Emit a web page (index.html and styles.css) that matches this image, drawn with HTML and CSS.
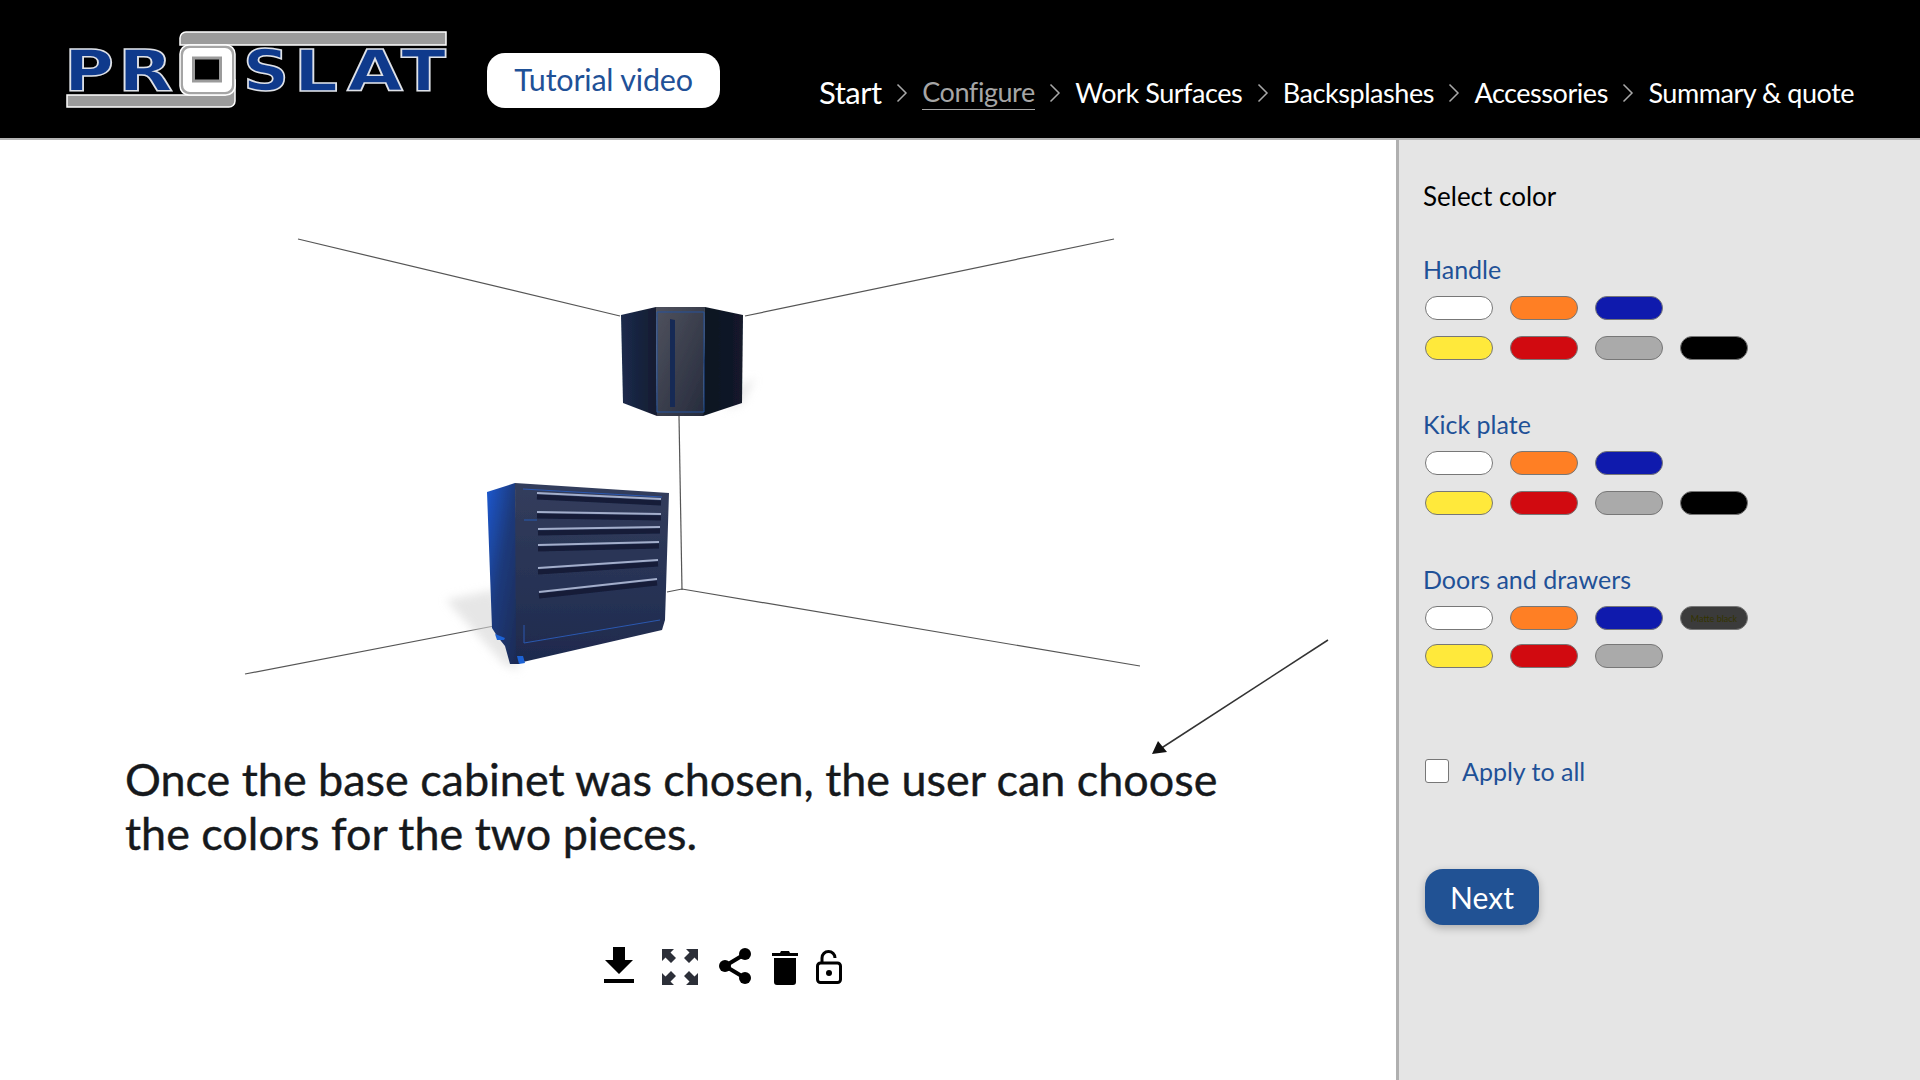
FILE: index.html
```html
<!DOCTYPE html>
<html lang="en">
<head>
<meta charset="utf-8">
<title>ProSlat configurator</title>
<link rel="stylesheet" href="styles.css">
</head>
<body>
<header class="topbar">
  <svg class="logo" viewBox="60 31 387 78" width="387" height="78" aria-label="ProSlat">
    <path class="logo-bar" d="M446 32H186a6 6 0 0 0-6 6V45H446Z"/>
    <path class="logo-bar" d="M67 95V107H229a6 6 0 0 0 6-6V80H225V95Z"/>
    <g class="logo-letters">
      <text x="64" y="91" textLength="50" lengthAdjust="spacingAndGlyphs">P</text>
      <text x="118" y="91" textLength="55" lengthAdjust="spacingAndGlyphs">R</text>
      <text x="243" y="91" textLength="46" lengthAdjust="spacingAndGlyphs">S</text>
      <text x="294" y="91" textLength="44" lengthAdjust="spacingAndGlyphs">L</text>
      <text x="347" y="91" textLength="56" lengthAdjust="spacingAndGlyphs">A</text>
      <text x="401" y="91" textLength="45" lengthAdjust="spacingAndGlyphs">T</text>
    </g>
    <rect class="logo-o-edge" x="180" y="45" width="55" height="50" rx="9"/>
    <rect class="logo-o" x="183" y="48" width="49" height="44" rx="7"/>
    <rect class="logo-o-in" x="193.500" y="58" width="27" height="23"/>
  </svg>
  <a class="tutorial">Tutorial video</a>
  <nav class="steps">
    <span class="step step-first">Start</span><span class="sep"><svg viewBox="0 0 12 20" width="12" height="20"><path d="M1.500 1.500 10 10 1.500 18.500"/></svg></span>
    <span class="step step-current">Configure</span><span class="sep"><svg viewBox="0 0 12 20" width="12" height="20"><path d="M1.500 1.500 10 10 1.500 18.500"/></svg></span>
    <span class="step">Work Surfaces</span><span class="sep"><svg viewBox="0 0 12 20" width="12" height="20"><path d="M1.500 1.500 10 10 1.500 18.500"/></svg></span>
    <span class="step">Backsplashes</span><span class="sep"><svg viewBox="0 0 12 20" width="12" height="20"><path d="M1.500 1.500 10 10 1.500 18.500"/></svg></span>
    <span class="step">Accessories</span><span class="sep"><svg viewBox="0 0 12 20" width="12" height="20"><path d="M1.500 1.500 10 10 1.500 18.500"/></svg></span>
    <span class="step">Summary &amp; quote</span>
  </nav>
</header>
<div class="body-row">
  <main class="stage">
    <svg class="scene" viewBox="0 140 1394 612" width="1394" height="612">
      <defs>
        <linearGradient id="uFront" x1="0" y1="0" x2="1" y2="1"><stop offset="0" stop-color="#4f525e"/><stop offset="1" stop-color="#262b3c"/></linearGradient>
        <linearGradient id="uLeft" x1="0" y1="0" x2="1" y2="0"><stop offset="0" stop-color="#1b2a4c"/><stop offset="1" stop-color="#151c30"/></linearGradient>
        <linearGradient id="uRight" x1="0" y1="0" x2="1" y2="0"><stop offset="0" stop-color="#0c1320"/><stop offset="1" stop-color="#131a2b"/></linearGradient>
        <linearGradient id="lSide" x1="0" y1="0" x2="1" y2="1"><stop offset="0" stop-color="#1a58d0"/><stop offset=".45" stop-color="#1c3a7c"/><stop offset="1" stop-color="#1c2950"/></linearGradient>
        <linearGradient id="lFront" x1="0" y1="0" x2="0" y2="1"><stop offset="0" stop-color="#333d5c"/><stop offset="1" stop-color="#1e2a4e"/></linearGradient>
        <filter id="soft" x="-5%" y="-5%" width="110%" height="110%"><feGaussianBlur stdDeviation=".7"/></filter>
        <filter id="shadow" x="-30%" y="-30%" width="160%" height="160%"><feGaussianBlur stdDeviation="5"/></filter>
      </defs>
      <g class="wire">
        <path d="M298 239 620 316"/>
        <path d="M745 316 1114 239"/>
        <path d="M679 416 682 590"/>
        <path d="M667 592 682 589 1140 666"/>
        <path d="M245 674 494 626"/>
      </g>
      <path class="shadow" d="M446 600 494 590 520 670 505 665Z" filter="url(#shadow)"/>
      <path class="shadow" d="M742 385 755 378 742 403 725 410Z" filter="url(#shadow)"/>
      <g filter="url(#soft)">
        <path d="M621 315 656 307 657 416 623 403Z" fill="url(#uLeft)"/>
        <path d="M656 307H705L703 416H657Z" fill="url(#uFront)"/>
        <path d="M705 307 743 315 742 403 703 416Z" fill="url(#uRight)"/>
        <path d="M657 312H704V412H657Z" fill="none" stroke="#24529c" stroke-width="1"/>
        <path d="M670 319 675 320V407H670Z" fill="#182a55"/>
        <path d="M487 492 515 483 520 664 510 664 505 646 497 636 492 628Z" fill="url(#lSide)"/>
        <path d="M515 483 669 493 665 620 662 630 523 662 516 660Z" fill="url(#lFront)"/>
        <path d="M495 634 505 638 504 640 497 640Z" fill="#1f62d4"/>
        <path d="M517 656 523 656 525 663 519 664Z" fill="#1f62d4"/>
        <g class="frontline"><path d="M523 489 662 497"/><path d="M524 643 660 620"/><path d="M524 520 537 520"/><path d="M524 625V643"/></g>
        <g class="handle-shadow"><path d="M537 497 661 503"/><path d="M537 516 661 518"/><path d="M538 533 660 531"/><path d="M538 549 659 546"/><path d="M538 572 658 564"/><path d="M539 596 657 583"/></g>
        <g class="handle"><path d="M537 493 661 499"/><path d="M537 512 661 514"/><path d="M538 529 660 527"/><path d="M538 545 659 542"/><path d="M538 568 658 560"/><path d="M539 592 657 579"/></g>
      </g>
      <g class="arrow">
        <path d="M1328 640 1160 749"/>
        <path class="arrow-head" d="M1152 754 1158 741 1167 752Z"/>
      </g>
    </svg>
    <p class="caption">Once the base cabinet was chosen, the user can choose<br>the colors for the two pieces.</p>
    <div class="tools">
      <svg class="tool t-down" viewBox="0 0 30 36" width="30" height="36"><path d="M9 0H21V13H29L15 27 1 13H9Z"/><rect x="0" y="32" width="30" height="4"/></svg>
      <svg class="tool t-expand" viewBox="0 0 36 36" width="36" height="36"><path d="M0 0H12L8.500 3.500 14 9 9 14 3.500 8.500 0 12ZM36 0V12L32.500 8.500 27 14 22 9 27.500 3.500 24 0ZM0 36V24L3.500 27.500 9 22 14 27 8.500 32.500 12 36ZM36 36H24L27.500 32.500 22 27 27 22 32.500 27.500 36 24Z"/></svg>
      <svg class="tool t-share" viewBox="0 0 32 36" width="32" height="36"><circle cx="26" cy="6" r="6"/><circle cx="6" cy="18" r="6"/><circle cx="26" cy="30" r="6"/><path class="share-line" d="M26 6 6 18 26 30"/></svg>
      <svg class="tool t-trash" viewBox="0 0 26 34" width="26" height="34"><path d="M9 0H17L18 2H26V5H0V2H8ZM2 7H24V31a3 3 0 0 1-3 3H5a3 3 0 0 1-3-3Z"/></svg>
      <svg class="tool t-lock" viewBox="0 0 26 34" width="26" height="34"><path class="lock-line" d="M6 13V8a6.500 6.500 0 0 1 13 0"/><rect class="lock-line" x="1.500" y="13" width="23" height="19.500" rx="3"/><circle cx="13" cy="23" r="3"/></svg>
    </div>
  </main>
  <aside class="panel">
    <h2 class="panel-title">Select color</h2>
    <section class="group">
      <h3 class="group-label">Handle</h3>
      <div class="row"><span class="sw white"></span><span class="sw orange"></span><span class="sw blue"></span></div>
      <div class="row"><span class="sw yellow"></span><span class="sw red"></span><span class="sw gray"></span><span class="sw black"></span></div>
    </section>
    <section class="group">
      <h3 class="group-label">Kick plate</h3>
      <div class="row"><span class="sw white"></span><span class="sw orange"></span><span class="sw blue"></span></div>
      <div class="row"><span class="sw yellow"></span><span class="sw red"></span><span class="sw gray"></span><span class="sw black"></span></div>
    </section>
    <section class="group group-tight">
      <h3 class="group-label">Doors and drawers</h3>
      <div class="row"><span class="sw white"></span><span class="sw orange"></span><span class="sw blue"></span><span class="sw matte">Matte black</span></div>
      <div class="row"><span class="sw yellow"></span><span class="sw red"></span><span class="sw gray"></span></div>
    </section>
    <label class="apply"><span class="box"></span>Apply to all</label>
    <button class="next">Next</button>
  </aside>
</div>
</body>
</html>
```
FILE: styles.css
```css
* { box-sizing: border-box; }
html, body { margin: 0; height: 100%; }
body { font-family: Lato, "Open Sans", sans-serif; background: #fff; overflow: hidden; }

.topbar { height: 140px; background: #000; border-bottom: 2px solid #b4b4b4; display: flex; align-items: flex-start; padding-left: 60px; }
.logo { margin-top: 31px; flex: none; }
.logo-bar { fill: #9b9b9b; stroke: #fff; stroke-width: 1.500; }
.logo-letters text { font-family: "DejaVu Sans", sans-serif; font-weight: 700; font-size: 57.500px; fill: #0f3a8c; stroke: #dfe2e8; stroke-width: 1.500px; }
.logo-o-edge { fill: #a5a5a5; stroke: #fff; stroke-width: 1.500; }
.logo-o { fill: #fff; }
.logo-o-in { fill: #000; stroke: #9b9b9b; stroke-width: 3; }

.tutorial { margin: 53px 0 0 40px; width: 233px; height: 55px; padding-bottom: 4px; background: #fff; border-radius: 18px; color: #1f5197; font-size: 30.500px; display: flex; align-items: center; justify-content: center; letter-spacing: -.2px; }

.steps { margin: 75px 0 0 99px; display: flex; align-items: center; color: #fff; font-size: 27px; line-height: 34px; }
.step { white-space: nowrap; letter-spacing: -.45px; }
.step-first { font-size: 31px; margin-top: -2px; }
.step-current { color: #a6a6a6; border-bottom: 1px solid #a6a6a6; }
.sep { width: 40.500px; display: flex; justify-content: center; }
.sep svg { fill: none; stroke: #a8a8a8; stroke-width: 1.500; }

.body-row { display: flex; height: 940px; }
.stage { width: 1396px; flex: none; background: #fff; }
.scene { display: block; overflow: visible; }
.wire path { fill: none; stroke: #555; stroke-width: 1.200; }
.shadow { fill: #d6d6d6; opacity: .6; }
.frontline path { fill: none; stroke: #2b58b0; stroke-width: 1; }
.handle-shadow path { fill: none; stroke: #141c38; stroke-width: 5; }
.handle path { fill: none; stroke: #a3aecb; stroke-width: 2; }
.arrow path { fill: none; stroke: #333; stroke-width: 1.500; }
.arrow .arrow-head { fill: #111; stroke: none; }

.caption { margin: 0; padding-left: 125px; font-size: 44.900px; line-height: 54px; color: #16191c; -webkit-text-stroke: .4px #16191c; }

.tools { margin-top: 87px; padding-left: 604px; display: flex; align-items: flex-start; }
.tool { flex: none; fill: #000; display: block; }
.t-expand { margin: 2px 0 0 28px; fill: #2c2f38; }
.t-share { margin: 1px 0 0 21px; }
.share-line { fill: none; stroke: #000; stroke-width: 4; }
.t-trash { margin: 4px 0 0 21px; }
.t-lock { margin: 3px 0 0 18px; }
.lock-line { fill: none; stroke: #000; stroke-width: 3; }

.panel { flex: 1; background: #e5e5e5; border-left: 3px solid #b0b0b0; padding: 39px 0 0 24px; }
.panel-title { margin: 0; font-size: 26px; line-height: 34px; font-weight: 400; color: #000; }
.group { margin-top: 40px; }
.group + .group { margin-top: 48px; }
.group-label { margin: 0 0 11px; font-size: 25px; line-height: 32px; font-weight: 400; color: #1f5197; }
.row { display: flex; gap: 17px; margin: 0 0 16px 2px; }
.group-tight .row { margin-bottom: 14px; }
.sw { width: 68px; height: 24px; border-radius: 12px; border: 1px solid #777; display: flex; align-items: center; justify-content: center; font-size: 9px; white-space: nowrap; }
.white { background: #fff; }
.orange { background: #ff7f24; }
.blue { background: #0f1aad; }
.yellow { background: #ffe93b; }
.red { background: #d10a10; }
.gray { background: #aaa; }
.black { background: #000; }
.matte { background: #3b3b3b; color: #333300; }

.apply { margin: 91px 0 0 2px; display: flex; align-items: center; height: 24px; font-size: 25px; color: #1f5197; }
.box { width: 24px; height: 24px; background: #fff; border: 1px solid #777; border-radius: 3px; margin-right: 13px; }
.next { display: block; margin: 86px 0 0 2px; width: 114px; height: 56px; border: 0; border-radius: 18px; background: #215294; color: #fff; font: 400 30px Lato, sans-serif; box-shadow: 0 3px 8px rgba(0,0,0,.25); }
```
